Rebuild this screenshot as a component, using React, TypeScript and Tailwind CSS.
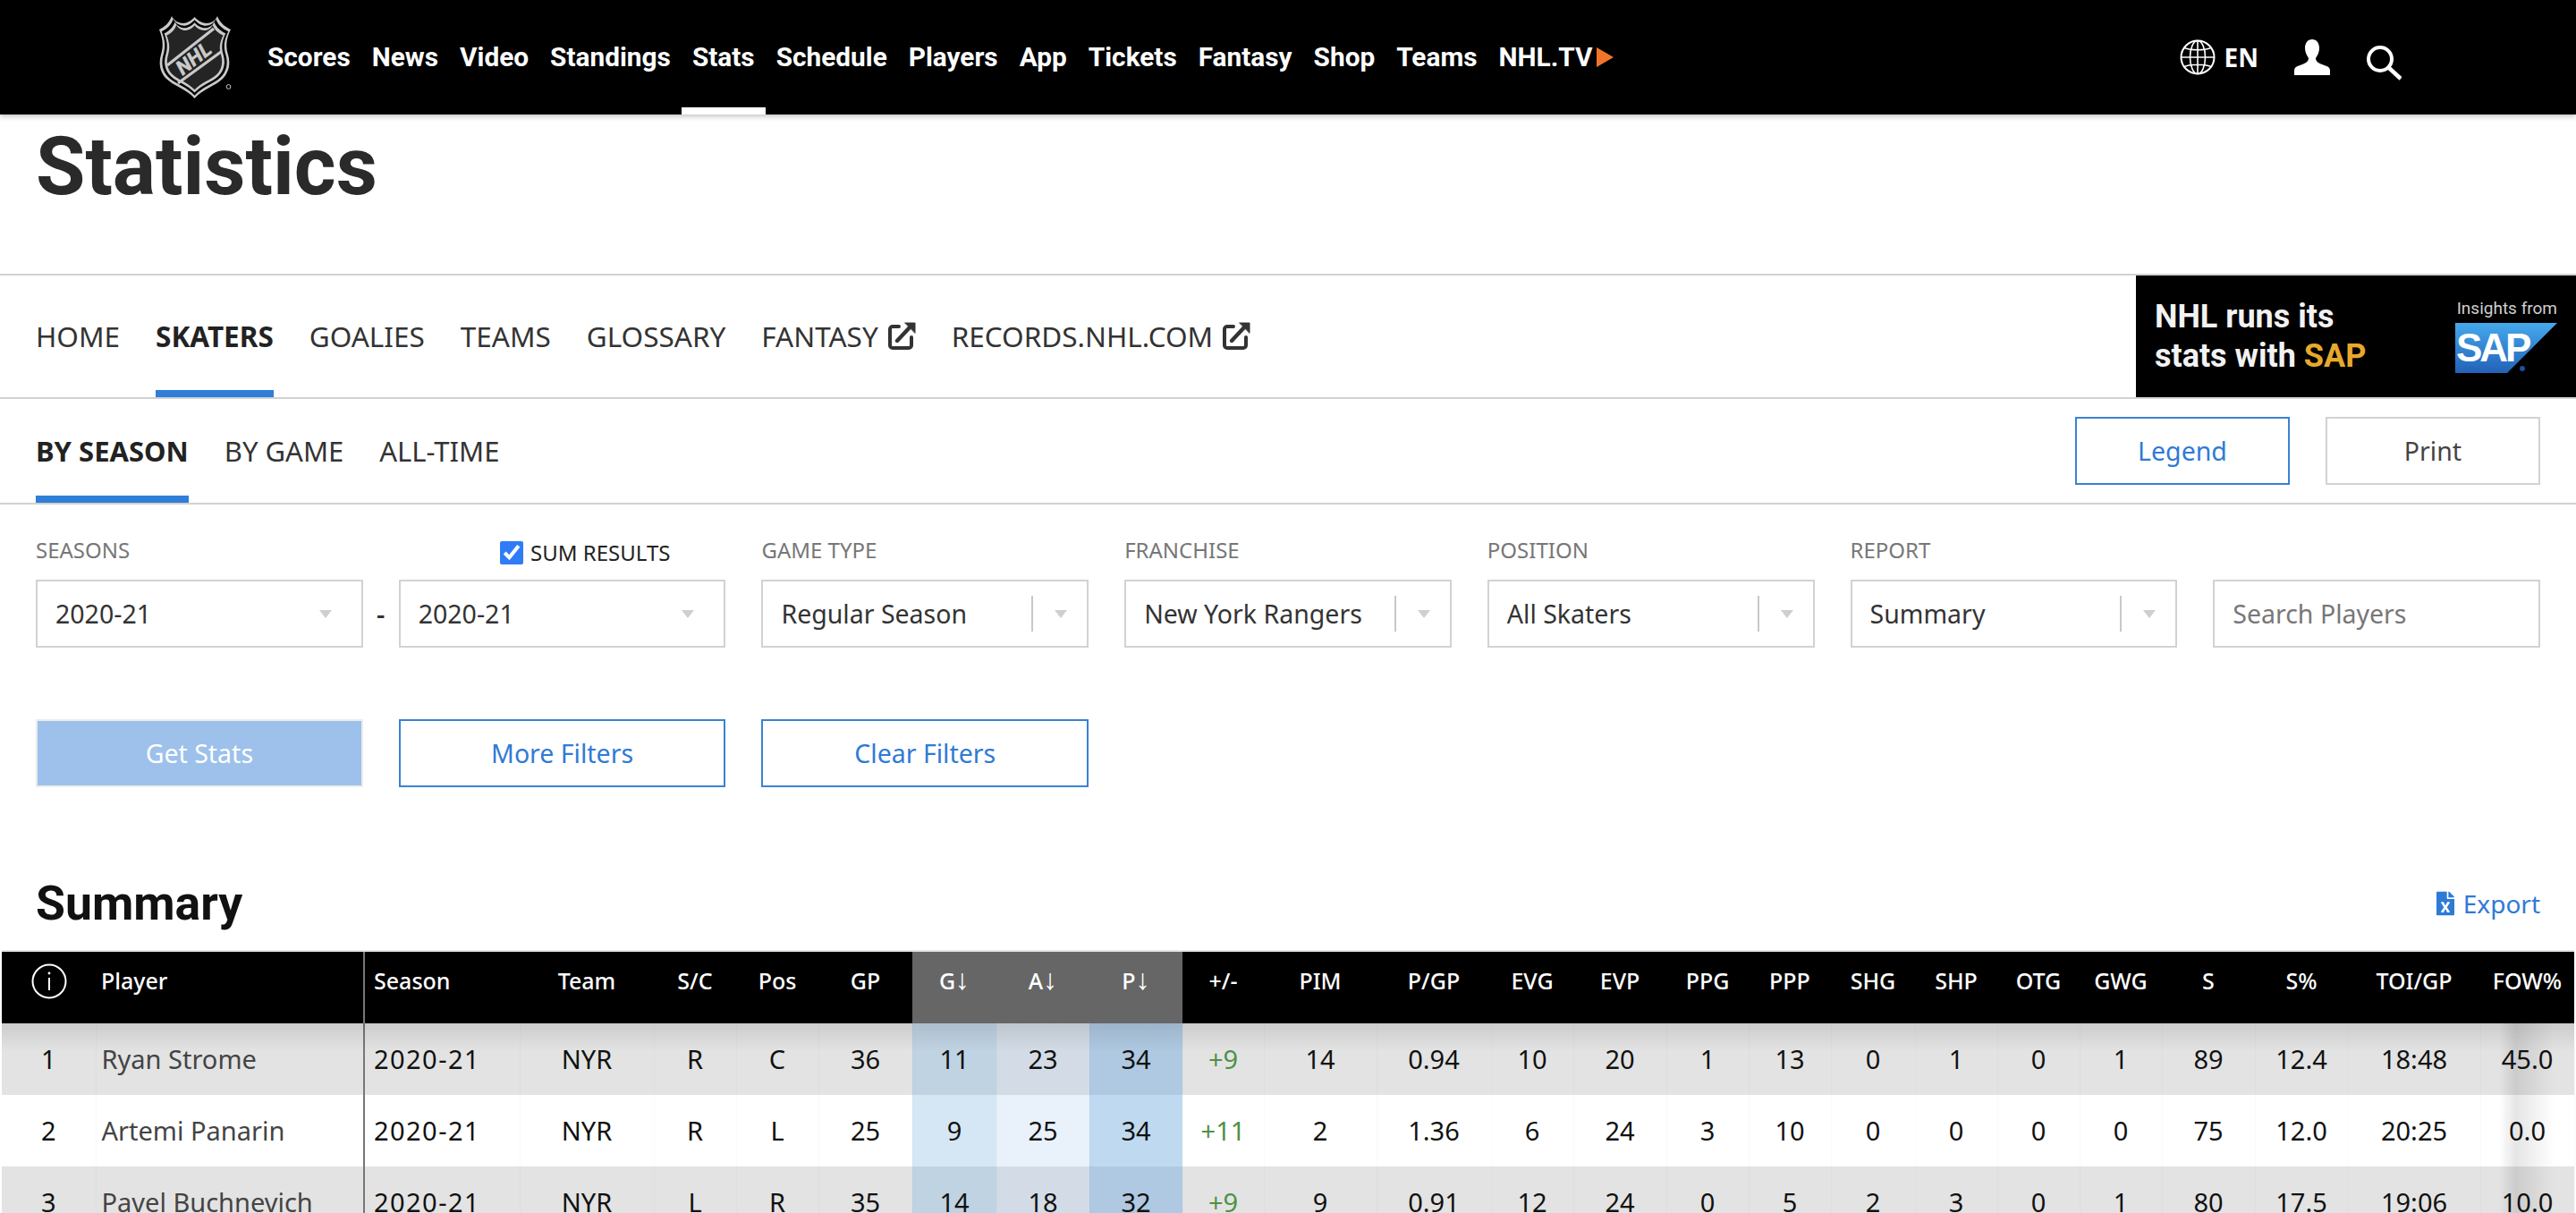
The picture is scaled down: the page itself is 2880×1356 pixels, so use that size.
import { FaFileExcel } from "react-icons/fa";

const navItems = ["Scores", "News", "Video", "Standings", "Stats", "Schedule", "Players", "App", "Tickets", "Fantasy", "Shop", "Teams"];

const columns = [
  { label: "", width: "w-[105px]", align: "text-center" },
  { label: "Player", width: "w-[300px]", align: "text-left pl-1.5" },
  { label: "Season", width: "w-[174px]", align: "text-left pl-2.5" },
  { label: "Team", width: "w-[150px]", align: "text-center" },
  { label: "S/C", width: "w-[92px]", align: "text-center" },
  { label: "Pos", width: "w-[92px]", align: "text-center" },
  { label: "GP", width: "w-[105px]", align: "text-center" },
  { label: "G", width: "w-[94px]", align: "text-center" },
  { label: "A", width: "w-[104px]", align: "text-center" },
  { label: "P", width: "w-[104px]", align: "text-center" },
  { label: "+/-", width: "w-[91px]", align: "text-center" },
  { label: "PIM", width: "w-[126px]", align: "text-center" },
  { label: "P/GP", width: "w-[128px]", align: "text-center" },
  { label: "EVG", width: "w-[92px]", align: "text-center" },
  { label: "EVP", width: "w-[104px]", align: "text-center" },
  { label: "PPG", width: "w-[92px]", align: "text-center" },
  { label: "PPP", width: "w-[92px]", align: "text-center" },
  { label: "SHG", width: "w-[94px]", align: "text-center" },
  { label: "SHP", width: "w-[92px]", align: "text-center" },
  { label: "OTG", width: "w-[92px]", align: "text-center" },
  { label: "GWG", width: "w-[92px]", align: "text-center" },
  { label: "S", width: "w-[104px]", align: "text-center" },
  { label: "S%", width: "w-[104px]", align: "text-center" },
  { label: "TOI/GP", width: "w-[148px]", align: "text-center" },
  { label: "FOW%", width: "w-[105px]", align: "text-center" },
];

const rows = [
  ["1", "Ryan Strome", "2020-21", "NYR", "R", "C", "36", "11", "23", "34", "+9", "14", "0.94", "10", "20", "1", "13", "0", "1", "0", "1", "89", "12.4", "18:48", "45.0"],
  ["2", "Artemi Panarin", "2020-21", "NYR", "R", "L", "25", "9", "25", "34", "+11", "2", "1.36", "6", "24", "3", "10", "0", "0", "0", "0", "75", "12.0", "20:25", "0.0"],
  ["3", "Pavel Buchnevich", "2020-21", "NYR", "L", "R", "35", "14", "18", "32", "+9", "9", "0.91", "12", "24", "0", "5", "2", "3", "0", "1", "80", "17.5", "19:06", "10.0"],
];

const heat = [
  ["bg-[#c0d3e3]", "bg-[#d3dce6]", "bg-[#aec9e1]"],
  ["bg-[#d5e7f5]", "bg-[#e9f1fb]", "bg-[#bfdaf0]"],
  ["bg-[#c0d3e3]", "bg-[#d3dce6]", "bg-[#aec9e1]"],
];

const shield =
  "M16 1C18 6 24 9 29 9C33 9 38 6 41.6 2C45 6 50 9 55 9C60 9 65 6 67 1C70 9 76 13 82 16C77 26 76 34 79 44C82 54 80 64 73 71C65 79 50 83 41.6 93C33 83 18 79 10 71C3 64 1 54 4 44C7 34 6 26 2 16C8 13 13 9 16 1Z";

function NhlLogo() {
  return (
    <svg viewBox="0 0 84 94" className="h-[94px] w-[84px] shrink-0">
      <path d={shield} fill="#c9c9c9" />
      <path d={shield} fill="#000" transform="translate(41.6 47) scale(0.93) translate(-41.6 -47)" />
      <path d={shield} fill="#c9c9c9" transform="translate(41.6 47) scale(0.86) translate(-41.6 -47)" />
      <path d={shield} fill="#242424" transform="translate(41.6 47) scale(0.79) translate(-41.6 -47)" />
      <path d="M11 56L63 15M23 76L71 41" stroke="#c9c9c9" strokeWidth="3.2" />
      <text x="41" y="56" textAnchor="middle" fontFamily="Roboto, sans-serif" fontSize="23" fontWeight="900" fontStyle="italic" fill="#c9c9c9" transform="rotate(-38 41 49)">
        NHL
      </text>
      <circle cx="79.5" cy="80" r="2.4" fill="none" stroke="#c9c9c9" strokeWidth="1" />
    </svg>
  );
}

function GlobeIcon() {
  return (
    <svg viewBox="0 0 40 40" className="h-10 w-10" fill="none" stroke="white" strokeWidth="1.6">
      <circle cx="20" cy="20" r="18.5" strokeWidth="2" />
      <ellipse cx="20" cy="20" rx="8.5" ry="18.5" />
      <path d="M20 1.5v37M1.5 20h37M5 9.5c8 3 22 3 30 0M5 30.5c8-3 22-3 30 0" />
    </svg>
  );
}

function UserIcon() {
  return (
    <svg viewBox="0 0 40 40" className="h-10 w-10" fill="white">
      <path d="M20 0c5 0 8 4 8 10 0 4-2 8-4 11 0 3 2 5 7 7 6 2 9 3 9 7v5H0v-5c0-4 3-5 9-7 5-2 7-4 7-7-2-3-4-7-4-11C12 4 15 0 20 0z" />
    </svg>
  );
}

function SearchIcon() {
  return (
    <svg viewBox="0 0 40 40" className="h-10 w-10" fill="none" stroke="white">
      <circle cx="16" cy="16" r="13" strokeWidth="4" />
      <path d="M25.5 25.5L39 38" strokeWidth="4.5" />
    </svg>
  );
}

function ExternalIcon() {
  return (
    <svg viewBox="0 0 32 32" className="ml-2.5 h-8 w-8 shrink-0" fill="none" stroke="#333" strokeLinecap="round">
      <path d="M13 5H6a3 3 0 0 0-3 3v18a3 3 0 0 0 3 3h18a3 3 0 0 0 3-3v-9" strokeWidth="4" />
      <path d="M11 21L25 6" strokeWidth="4.4" />
      <path d="M20 1h11v11z" fill="#333" strokeWidth="1" />
    </svg>
  );
}

function SapBanner() {
  return (
    <div className="flex h-[136px] w-[492px] items-center justify-between bg-black pl-[21px] pr-[21px]">
      <div className="font-['Roboto',sans-serif] text-[36px] leading-[44px] font-bold text-[#f2f2f2]">
        <div>NHL runs its</div>
        <div>
          stats with <span className="text-[#e7a92d]">SAP</span>
        </div>
      </div>
      <div className="flex flex-col items-end">
        <div className="font-['Roboto',sans-serif] text-[19px] leading-5 text-[#cfcfcf]">Insights from</div>
        <div className="relative mt-[6px] h-[56px] w-[114px]">
          <svg viewBox="0 0 114 56" className="h-full w-full">
            <defs>
              <linearGradient id="sapFill" x1="0" y1="0" x2="0" y2="1">
                <stop offset="0" stopColor="#46a9ec" />
                <stop offset="1" stopColor="#2262b8" />
              </linearGradient>
            </defs>
            <path d="M0 0h114L58 56H0z" fill="url(#sapFill)" />
            <circle cx="75" cy="51" r="3" fill="#1d4f9c" />
          </svg>
          <span className="absolute inset-y-0 left-[1px] flex items-center font-['Liberation_Sans',sans-serif] text-[44px] font-bold tracking-[-3px] text-white">SAP</span>
        </div>
      </div>
    </div>
  );
}

function Select({ value, divided }: { value: string; divided?: boolean }) {
  return (
    <div className={`flex h-[76px] items-center justify-between border-2 border-[#d2d2d2] bg-white pl-[20px] ${divided ? "pr-[22px]" : "pr-[33px]"}`}>
      <span className="text-[28.5px] text-[#333]">{value}</span>
      <span className="flex items-center">
        {divided && <span className="mr-[24px] h-10 w-0.5 bg-[#c8c8c8]" />}
        <span className="h-0 w-0 border-x-[7px] border-t-[9px] border-x-transparent border-t-[#cfcfcf]" />
      </span>
    </div>
  );
}

function Label({ children }: { children: string }) {
  return <div className="mb-[17px] h-[32px] text-[24px] leading-8 text-[#777]">{children}</div>;
}

function OutlineButton({ children }: { children: string }) {
  return (
    <button className="flex h-[76px] items-center justify-center border-2 border-[#3a82d4] bg-white text-[28.5px] text-[#2f7ad6]">
      {children}
    </button>
  );
}

export default function App() {
  return (
    <div className="h-screen overflow-hidden bg-white font-['Noto_Sans',sans-serif]">
      <header className="relative z-10 flex h-[128px] items-center bg-black pl-[176px] shadow-[0_2px_6px_rgba(0,0,0,0.25)]">
        <NhlLogo />
        <nav className="ml-[27px] flex h-full items-stretch font-['Roboto',sans-serif] text-[29.8px] font-bold text-white">
          {navItems.map((item) => (
            <a
              key={item}
              className={`flex items-center px-3 ${item === "Stats" ? "border-b-[8px] border-white pt-2" : ""}`}
            >
              {item}
            </a>
          ))}
          <a className="flex items-center px-3">
            NHL.TV
            <span className="ml-1 h-0 w-0 border-y-[11px] border-l-[19px] border-y-transparent border-l-[#f0752a]" />
          </a>
        </nav>
        <div className="ml-auto flex items-center pr-[195px]">
          <GlobeIcon />
          <span className="ml-2.5 text-[28px] font-bold text-white">EN</span>
          <span className="ml-10"><UserIcon /></span>
          <span className="mt-3 ml-10"><SearchIcon /></span>
        </div>
      </header>

      <div className="flex h-[178px] pl-10">
        <h1 className="mt-[3px] font-['Roboto',sans-serif] text-[90px] leading-[112px] font-bold text-[#2a2a2a]">Statistics</h1>
      </div>

      <div className="flex h-[140px] items-stretch border-y-2 border-[#d2d2d2]">
        <div className="flex flex-1 gap-10 pl-10 text-[31.5px] text-[#333]">
          <a className="flex items-center">HOME</a>
          <a className="flex items-center border-b-[8px] border-[#2f7ed8] pt-2 font-bold text-[#222]">SKATERS</a>
          <a className="flex items-center">GOALIES</a>
          <a className="flex items-center">TEAMS</a>
          <a className="flex items-center">GLOSSARY</a>
          <a className="flex items-center">FANTASY<ExternalIcon /></a>
          <a className="flex items-center">RECORDS.NHL.COM<ExternalIcon /></a>
        </div>
        <SapBanner />
      </div>

      <div className="flex h-[118px] items-stretch justify-between border-b-2 border-[#d2d2d2] px-10">
        <div className="flex gap-10 text-[31px] text-[#333]">
          <a className="flex items-center border-b-[8px] border-[#2f7ed8] pt-2 font-bold text-[#222]">BY SEASON</a>
          <a className="flex items-center">BY GAME</a>
          <a className="flex items-center">ALL-TIME</a>
        </div>
        <div className="flex items-center gap-10">
          <button className="h-[76px] w-[240px] border-2 border-[#3a82d4] text-[28.5px] text-[#2f7ad6]">Legend</button>
          <button className="h-[76px] w-[240px] border-2 border-[#d2d2d2] text-[28.5px] text-[#444]">Print</button>
        </div>
      </div>

      <div className="grid grid-cols-7 gap-x-10 px-10 pt-[35px]">
        <div className="col-span-2">
          <div className="flex items-end justify-between pr-[62px]">
            <Label>SEASONS</Label>
            <label className="mb-[14px] flex items-center gap-2 text-[24px] leading-8 text-[#222]">
              <input type="checkbox" defaultChecked className="h-[26px] w-[26px] accent-[#2f7cf6]" />
              SUM RESULTS
            </label>
          </div>
          <div className="grid grid-cols-[1fr_40px_1fr] items-center">
            <Select value="2020-21" />
            <span className="text-center text-[29px] font-semibold text-[#333]">-</span>
            <Select value="2020-21" />
          </div>
        </div>
        <div>
          <Label>GAME TYPE</Label>
          <Select value="Regular Season" divided />
        </div>
        <div>
          <Label>FRANCHISE</Label>
          <Select value="New York Rangers" divided />
        </div>
        <div>
          <Label>POSITION</Label>
          <Select value="All Skaters" divided />
        </div>
        <div>
          <Label>REPORT</Label>
          <Select value="Summary" divided />
        </div>
        <div className="pt-[49px]">
          <div className="flex h-[76px] items-center border-2 border-[#d2d2d2] pl-5 text-[28.5px] text-[#777]">Search Players</div>
        </div>
      </div>

      <div className="mt-20 grid grid-cols-7 gap-x-10 px-10">
        <button className="flex h-[76px] items-center justify-center border-2 border-[#ececec] bg-[#9dc1ea] text-[28.5px] text-white">Get Stats</button>
        <OutlineButton>More Filters</OutlineButton>
        <OutlineButton>Clear Filters</OutlineButton>
      </div>

      <div className="mt-[92px] mb-[14px] flex h-[76px] items-center justify-between px-10">
        <h2 className="font-['Roboto',sans-serif] text-[53.5px] font-bold text-[#111]">Summary</h2>
        <a className="flex items-center gap-2.5 text-[28px] text-[#2f7ad6]">
          <FaFileExcel className="h-7 w-5" />
          Export
        </a>
      </div>

      <div className="relative mx-0.5 border-t-2 border-[#e5e5e5]">
        <table className="w-[2876px] table-fixed border-collapse text-[29px]">
          <colgroup>
            {columns.map((col, i) => (
              <col key={i} className={col.width} />
            ))}
          </colgroup>
          <thead>
            <tr className="h-[80px] bg-black text-[25px] text-white">
              {columns.map((col, i) => (
                <th
                  key={i}
                  className={`pb-[14px] font-medium ${col.align} ${i === 1 ? "border-r-2 border-[#777]" : ""} ${i >= 7 && i <= 9 ? "bg-[#666]" : ""}`}
                >
                  {i === 0 ? (
                    <svg viewBox="0 0 40 40" className="mx-auto h-10 w-10" fill="none" stroke="white">
                      <circle cx="20" cy="20" r="18.5" strokeWidth="2" />
                      <path d="M20 16v14" strokeWidth="2" />
                      <circle cx="20" cy="11" r="1.4" fill="white" strokeWidth="0" />
                    </svg>
                  ) : i >= 7 && i <= 9 ? (
                    <>
                      {col.label}
                      <span className="text-[32px] leading-none font-normal">↓</span>
                    </>
                  ) : (
                    col.label
                  )}
                </th>
              ))}
            </tr>
          </thead>
          <tbody>
            {rows.map((row, r) => (
              <tr key={r} className={`h-[80px] ${r % 2 === 0 ? "bg-[#e3e3e3]" : "bg-white"}`}>
                {row.map((cell, i) => (
                  <td
                    key={i}
                    className={`${columns[i].align} ${i === 1 ? "border-r-2 border-[#777] text-[#444]" : "border-r border-black/[0.02]"} ${i === 10 ? "text-[#4f9145]" : i !== 1 ? "text-[#111]" : ""} ${i === 2 ? "tracking-[0.05em]" : ""} ${i >= 7 && i <= 9 ? heat[r][i - 7] : ""}`}
                  >
                    {cell}
                  </td>
                ))}
              </tr>
            ))}
          </tbody>
        </table>
        <div className="pointer-events-none absolute top-[80px] right-0 left-0 h-8 bg-gradient-to-b from-black/10 to-transparent" />
        <div className="pointer-events-none absolute top-[80px] right-[22px] bottom-0 w-[62px] bg-gradient-to-r from-transparent via-black/10 via-30% to-transparent" />
      </div>
    </div>
  );
}
